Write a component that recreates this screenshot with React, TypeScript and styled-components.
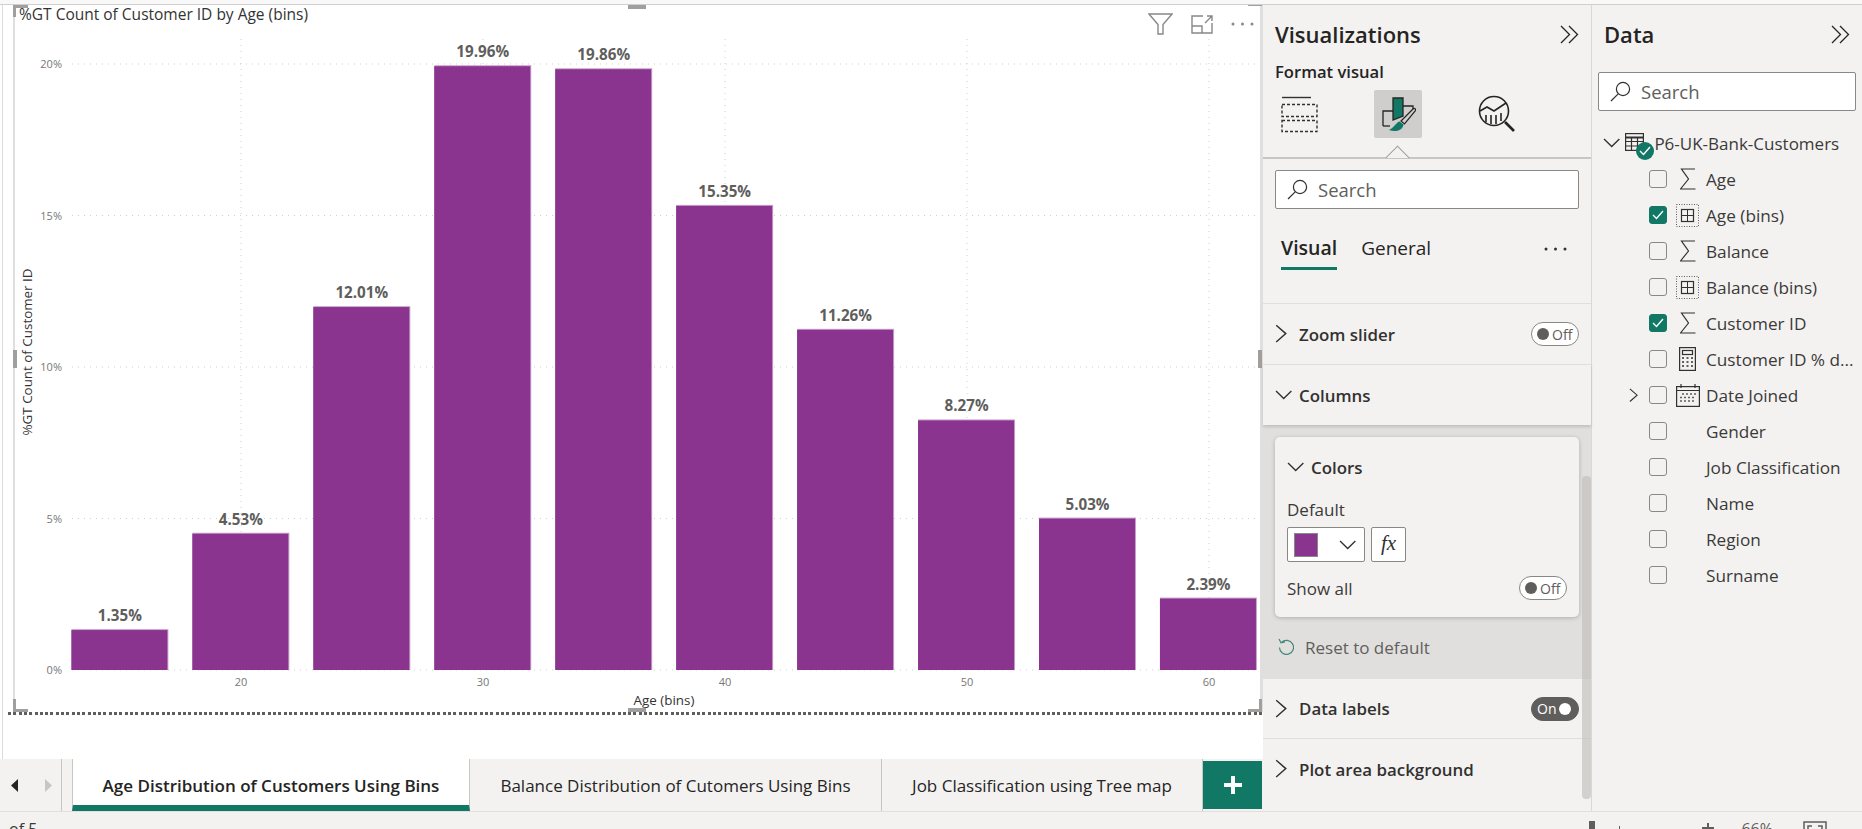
import React from 'react';
import styled, { createGlobalStyle } from 'styled-components';

const GREEN = '#117865';
const PANEL = '#f3f2f1';
const FONT = '"Open Sans", "Liberation Sans", sans-serif';

const GlobalStyle = createGlobalStyle`
  html, body {
    margin: 0;
    padding: 0;
    background: ${PANEL};
    font-family: ${FONT};
    overflow: hidden;
  }
`;

const Page = styled.div`
  width: 1862px;
  height: 829px;
  display: flex;
  flex-direction: column;
  overflow: hidden;
  background: ${PANEL};
  color: #252423;
`;

const TopEdge = styled.div`
  height: 4px;
  flex: none;
  background: #f8f8f8;
  border-bottom: 1px solid #d2d0ce;
`;

const Main = styled.div`
  flex: 1;
  display: flex;
  min-height: 0;
`;

const ReportColumn = styled.div`
  width: 1263px;
  flex: none;
  display: flex;
  flex-direction: column;
`;

const CanvasArea = styled.div`
  height: 754px;
  flex: none;
  background: #fff;
  box-sizing: border-box;
  padding-left: 3px;
  position: relative;
  &::before {
    content: '';
    position: absolute;
    left: 2px;
    top: 0;
    bottom: 0;
    width: 1px;
    background: #dcdcdc;
  }
`;

const VisualFrame = styled.div`
  position: relative;
  margin-left: 10px;
  height: 707px;
  box-sizing: border-box;
  border-left: 2px solid #e1dfdd;
  border-right: 3px solid #e1dfdd;
`;

const ChartSvg = styled.svg`
  display: block;
  overflow: visible;
`;

const DottedRule = styled.div`
  margin-left: 5px;
  height: 3px;
  background: repeating-linear-gradient(90deg, #605e5c 0 3px, #fff 3px 5.3px);
`;

const Handle = styled.div<{ $x: number; $y: number; $w: number; $h: number }>`
  position: absolute;
  left: ${(p) => p.$x}px;
  top: ${(p) => p.$y}px;
  width: ${(p) => p.$w}px;
  height: ${(p) => p.$h}px;
  background: #a19f9d;
`;

const VisualHeader = styled.div`
  position: absolute;
  right: 6px;
  top: 8px;
  display: flex;
  align-items: center;
  gap: 18px;
`;

const TabBar = styled.div`
  height: 52px;
  flex: none;
  display: flex;
  background: ${PANEL};
`;

const PagerNav = styled.div`
  width: 62px;
  flex: none;
  display: flex;
  align-items: center;
  justify-content: space-between;
  box-sizing: border-box;
  padding: 0 9px 0 11px;
  border-right: 1px solid #c8c6c4;
`;

const PagerGap = styled.div`
  width: 10px;
  flex: none;
`;

const Tab = styled.div<{ $active?: boolean; $w: number }>`
  width: ${(p) => p.$w}px;
  flex: none;
  box-sizing: border-box;
  display: flex;
  align-items: center;
  justify-content: center;
  padding-top: ${(p) => (p.$active ? '7px' : '1px')};
  font-size: 17px;
  font-weight: ${(p) => (p.$active ? 600 : 400)};
  white-space: nowrap;
  color: #252423;
  background: ${(p) => (p.$active ? '#fff' : 'transparent')};
  border-left: ${(p) => (p.$active ? '1px solid #c8c6c4' : '0')};
  border-right: 1px solid #c8c6c4;
  border-bottom: ${(p) => (p.$active ? `6px solid ${GREEN}` : '0')};
`;

const AddTab = styled.div`
  width: 59px;
  height: 48px;
  margin: 2px 1px 0 auto;
  background: ${GREEN};
  display: flex;
  align-items: center;
  justify-content: center;
`;

const VisualPanel = styled.div`
  width: 329px;
  flex: none;
  box-sizing: border-box;
  border-right: 1px solid #dad8d6;
  position: relative;
  display: flex;
  flex-direction: column;
`;

const PanelHeader = styled.div`
  display: flex;
  align-items: center;
  justify-content: space-between;
  height: 30px;
  margin-top: 14px;
  padding: 0 12px;
`;

const PanelTitle = styled.h2`
  margin: 0;
  font-size: 22px;
  line-height: 30px;
  font-weight: 600;
  color: #252423;
`;

const SubTitle = styled.div`
  margin: 13px 12px 0;
  height: 20px;
  font-size: 16.6px;
  line-height: 20px;
  font-weight: 600;
`;

const PaneIcons = styled.div`
  margin-top: 8px;
  padding-left: 12px;
  display: flex;
  gap: 51px;
`;

const PaneIcon = styled.div<{ $active?: boolean }>`
  width: 48px;
  height: 48px;
  border-radius: 2px;
  display: flex;
  align-items: center;
  justify-content: center;
  background: ${(p) => (p.$active ? '#d0cecc' : 'transparent')};
`;

const NotchRule = styled.div`
  margin-top: 19px;
  height: 2px;
  background: #c8c6c4;
  position: relative;
  &::after {
    content: '';
    position: absolute;
    left: 126px;
    top: -8px;
    width: 17px;
    height: 17px;
    box-sizing: border-box;
    background: linear-gradient(135deg, ${PANEL} 50%, transparent 50%);
    border-top: 1px solid #a19f9d;
    border-left: 1px solid #a19f9d;
    transform: rotate(45deg);
  }
`;

const SearchBox = styled.div<{ $top: number; $x: number }>`
  margin: ${(p) => p.$top}px ${(p) => p.$x}px 0;
  height: 39px;
  box-sizing: border-box;
  background: #fff;
  border: 1px solid #8a8886;
  border-radius: 2px;
  display: flex;
  align-items: center;
  gap: 10px;
  padding-left: 11px;
  font-size: 18.5px;
  line-height: 39px;
  color: #605e5c;
`;

const PaneTabs = styled.div`
  margin-top: 20px;
  height: 41px;
  padding: 0 24px 0 18px;
  display: flex;
  gap: 24px;
`;

const PaneTab = styled.div<{ $active?: boolean }>`
  height: 38px;
  line-height: 38px;
  font-size: ${(p) => (p.$active ? 19.5 : 19)}px;
  color: #252423;
  font-weight: ${(p) => (p.$active ? 600 : 400)};
  border-bottom: 3px solid ${(p) => (p.$active ? GREEN : 'transparent')};
`;

const PaneDots = styled.div`
  margin-left: auto;
  margin-top: 5px;
`;

const PaneSpacer = styled.div`
  height: 33px;
`;

const SectionRow = styled.div<{ $shadow?: boolean; $h?: number }>`
  height: ${(p) => p.$h || 61}px;
  flex: none;
  box-sizing: border-box;
  border-top: 1px solid #e1dfdd;
  padding: 0 12px;
  display: flex;
  align-items: center;
  font-size: 16.9px;
  font-weight: 600;
  color: #323130;
  position: relative;
  background: ${PANEL};
  box-shadow: ${(p) => (p.$shadow ? '0 2px 3px rgba(0,0,0,0.14)' : 'none')};
`;

const ChevronSlot = styled.span`
  width: 24px;
  flex: none;
  display: flex;
  align-items: center;
`;

const SectionBody = styled.div`
  height: 253px;
  flex: none;
  background: #e1dfdd;
  box-sizing: border-box;
  padding-top: 12px;
`;

const Card = styled.div`
  margin-left: 12px;
  width: 304px;
  height: 180px;
  box-sizing: border-box;
  padding: 0 12px;
  background: ${PANEL};
  border-radius: 5px;
  box-shadow: 0 1px 4px rgba(0, 0, 0, 0.22);
`;

const CardHeader = styled.div`
  height: 40px;
  padding-top: 10px;
  display: flex;
  align-items: center;
  font-size: 16.9px;
  font-weight: 600;
  color: #323130;
`;

const FieldLabel = styled.div`
  margin-top: 13px;
  height: 20px;
  line-height: 20px;
  font-size: 17px;
  color: #3b3a39;
`;

const ColorControls = styled.div`
  margin-top: 7px;
  display: flex;
  gap: 6px;
`;

const ColorSelect = styled.div`
  width: 78px;
  height: 35px;
  box-sizing: border-box;
  background: #fff;
  border: 1px solid #8a8886;
  border-radius: 2px;
  display: flex;
  align-items: center;
  justify-content: space-between;
  padding: 0 8px 0 6px;
`;

const Swatch = styled.div`
  width: 24px;
  height: 24px;
  box-sizing: border-box;
  background: #8a338f;
  border: 1px solid #8a8886;
`;

const FxButton = styled.div`
  width: 35px;
  height: 35px;
  box-sizing: border-box;
  background: #fff;
  border: 1px solid #8a8886;
  border-radius: 2px;
  text-align: center;
  font: italic 21px/31px 'Liberation Serif', serif;
  color: #323130;
`;

const ShowAllRow = styled.div`
  margin-top: 14px;
  display: flex;
  align-items: center;
  justify-content: space-between;
  font-size: 17px;
  color: #3b3a39;
`;

const ResetRow = styled.div`
  height: 61px;
  display: flex;
  align-items: center;
  gap: 11px;
  padding-left: 15px;
  font-size: 17px;
  color: #605e5c;
`;

const Toggle = styled.div<{ $on?: boolean; $inline?: boolean }>`
  width: 48px;
  height: 24px;
  box-sizing: border-box;
  border-radius: 12px;
  flex: none;
  margin-left: ${(p) => (p.$inline ? 'auto' : '0')};
  display: flex;
  flex-direction: ${(p) => (p.$on ? 'row-reverse' : 'row')};
  align-items: center;
  justify-content: ${(p) => (p.$on ? 'flex-end' : 'flex-start')};
  gap: 3px;
  padding: 0 5px;
  font-size: 14px;
  font-weight: 400;
  color: ${(p) => (p.$on ? '#fff' : '#605e5c')};
  background: ${(p) => (p.$on ? '#605e5c' : '#fff')};
  border: 1px solid ${(p) => (p.$on ? '#605e5c' : '#8a8886')};
  &::before {
    content: '';
    width: 12px;
    height: 12px;
    border-radius: 50%;
    flex: none;
    background: ${(p) => (p.$on ? '#fff' : '#605e5c')};
  }
`;

const ScrollThumb = styled.div`
  position: absolute;
  right: 0;
  top: 471px;
  width: 9px;
  height: 323px;
  border-radius: 4px;
  background: rgba(190, 187, 184, 0.6);
`;

const DataPanel = styled.div`
  flex: 1;
  display: flex;
  flex-direction: column;
`;

const TreeHead = styled.div`
  margin-top: 14px;
  height: 36px;
  display: flex;
  align-items: center;
  padding-left: 11px;
  font-size: 17px;
  color: #3b3a39;
  white-space: nowrap;
`;

const TableIconWrap = styled.span`
  position: relative;
  width: 29px;
  height: 20px;
  margin-left: 5px;
  flex: none;
`;

const StatusBadge = styled.span`
  position: absolute;
  left: 11px;
  top: 9px;
  width: 18px;
  height: 18px;
  border-radius: 50%;
  background: ${GREEN};
  display: flex;
  align-items: center;
  justify-content: center;
`;

const FieldRow = styled.div`
  height: 36px;
  display: flex;
  align-items: center;
  font-size: 17.2px;
  color: #3b3a39;
  white-space: nowrap;
`;

const ExpandSlot = styled.span`
  width: 57px;
  flex: none;
  box-sizing: border-box;
  padding-right: 11px;
  display: flex;
  justify-content: flex-end;
`;

const CheckBox = styled.span<{ $checked?: boolean }>`
  width: 18px;
  height: 18px;
  flex: none;
  box-sizing: border-box;
  border-radius: 3px;
  border: 1px solid ${(p) => (p.$checked ? GREEN : '#8a8886')};
  background: ${(p) => (p.$checked ? GREEN : 'transparent')};
  display: flex;
  align-items: center;
  justify-content: center;
`;

const FieldIcon = styled.span<{ $inset: number }>`
  width: 39px;
  flex: none;
  padding-left: ${(p) => p.$inset}px;
  box-sizing: border-box;
  display: flex;
  align-items: center;
`;

const StatusBar = styled.div`
  height: 18px;
  flex: none;
  box-sizing: border-box;
  border-top: 1px solid #e1dfdd;
  display: flex;
  align-items: flex-start;
  overflow: hidden;
  font-size: 16px;
  line-height: 20px;
  color: #605e5c;
  background: ${PANEL};
`;

const PageCount = styled.span`
  margin-left: 9px;
  margin-top: 7px;
  color: #3b3a39;
`;

const ZoomGroup = styled.div`
  margin-left: auto;
  display: flex;
  align-items: flex-start;
`;

const ZoomTrack = styled.div`
  width: 106px;
  height: 18px;
  margin-right: 6px;
  position: relative;
  &::before {
    content: '';
    position: absolute;
    left: 0;
    top: 9px;
    width: 6px;
    height: 8px;
    background: #605e5c;
  }
  &::after {
    content: '';
    position: absolute;
    left: 30px;
    top: 14px;
    width: 1px;
    height: 4px;
    background: #605e5c;
  }
`;

const ZoomPct = styled.span`
  margin: 7px 30px 0 26px;
`;

const FitIcon = styled.svg`
  margin: 9px 35px 0 0;
`;

const Chevron = ({ dir = 'right', size = 12 }: { dir?: 'right' | 'down'; size?: number }) =>
  dir === 'right' ? (
    <svg width={size} height={size * 1.6} viewBox="0 0 10 16" fill="none" stroke="#323130" strokeWidth="1.2">
      <path d="M1 1l8 7-8 7" />
    </svg>
  ) : (
    <svg width={size * 1.45} height={size} viewBox="0 0 17 10" fill="none" stroke="#323130" strokeWidth="1.3">
      <path d="M1 1l7.5 7.5L16 1" />
    </svg>
  );

const DoubleChevron = () => (
  <svg width="19" height="19" viewBox="0 0 19 19" fill="none" stroke="#252423" strokeWidth="1.3">
    <path d="M1 1l8.5 8.5L1 18M9 1l8.5 8.5L9 18" />
  </svg>
);

const SearchIcon = () => (
  <svg width="21" height="21" viewBox="0 0 21 21" fill="none" stroke="#323130" strokeWidth="1.2">
    <circle cx="13" cy="8" r="6.6" />
    <path d="M8.2 12.8L1 20" />
  </svg>
);

const Dots = ({ color }: { color: string }) => (
  <svg width="23" height="4" viewBox="0 0 23 4" fill={color}>
    <circle cx="2" cy="2" r="1.5" />
    <circle cx="11.5" cy="2" r="1.5" />
    <circle cx="21" cy="2" r="1.5" />
  </svg>
);

const FilterIcon = () => (
  <svg width="25" height="22" viewBox="0 0 25 22" fill="none" stroke="#8a8886" strokeWidth="1.4">
    <path d="M1 1h23l-9 10.5V21h-5v-9.5z" />
  </svg>
);

const FocusIcon = () => (
  <svg width="22" height="19" viewBox="0 0 22 19" fill="none" stroke="#8a8886" strokeWidth="1.4">
    <path d="M12 1H1v17h20V8M1 11h10v7M14 8l7-7M16 1h5v5" />
  </svg>
);

const BuildIcon = () => (
  <svg width="37" height="37" viewBox="0 0 37 37" fill="none" stroke="#323130" strokeWidth="1.4">
    <path d="M1 1.5h29" />
    <rect x="1" y="8.5" width="35" height="12" strokeDasharray="3 2" />
    <rect x="1" y="24.5" width="35" height="11" strokeDasharray="3 2" />
  </svg>
);

const FormatIcon = () => (
  <svg width="36" height="37" viewBox="0 0 36 37" fill="none" stroke="#252423" strokeWidth="1.3">
    <path d="M3 30V15h10M23 10h10v5" />
    <path d="M3 30h7" />
    <path d="M13 24V2h10v18z" fill={GREEN} />
    <path d="M21 25L33 13c1.5-1.2 3.2 0 2.4 1.6L24.5 28z" fill="#d0cecc" strokeWidth="1.2" />
    <path d="M19.5 25.5c-3 .3-4 5-10.5 8.5 5 2 13.5 1.5 14.5-5.5z" fill={GREEN} stroke="none" />
  </svg>
);

const AnalyticsIcon = () => (
  <svg width="38" height="38" viewBox="0 0 38 38" fill="none" stroke="#252423" strokeWidth="1.6">
    <circle cx="16" cy="16" r="14.5" />
    <path d="M2 16l7-4 7 4 12-8" />
    <path d="M8 20v7M13 20v9M18 20v9M23 18v8" />
    <path d="M27 27l9 9" strokeWidth="2.6" />
  </svg>
);

const SigmaIcon = () => (
  <svg width="16" height="22" viewBox="0 0 16 22" fill="none" stroke="#323130" strokeWidth="1.2">
    <path d="M15 1H1.5l7 10-8 10h15" />
  </svg>
);

const BinsIcon = () => (
  <svg width="23" height="23" viewBox="0 0 23 23" fill="none" stroke="#323130">
    <rect x="0.5" y="0.5" width="22" height="22" strokeDasharray="1 1.5" stroke="#605e5c" />
    <rect x="5.5" y="5.5" width="12" height="12" strokeWidth="1.2" />
    <path d="M11.5 5.5v12M5.5 11.5h12" />
  </svg>
);

const CalcIcon = () => (
  <svg width="17" height="24" viewBox="0 0 17 24" fill="none" stroke="#323130" strokeWidth="1.2">
    <rect x="0.6" y="0.6" width="15.8" height="22.8" />
    <rect x="3.5" y="3.5" width="10" height="4" />
    <path d="M3 11h2M7.5 11h2M12 11h2M3 15h2M7.5 15h2M12 15h2M3 19h2M7.5 19h2M12 19h2" strokeWidth="1.6" />
  </svg>
);

const CalendarIcon = () => (
  <svg width="24" height="23" viewBox="0 0 24 23" fill="none" stroke="#323130" strokeWidth="1.2">
    <rect x="0.6" y="2.6" width="22.8" height="19.8" />
    <path d="M1 6.5h22M5 0v4M19 0v4" />
    <path d="M6 10h2M10 10h2M14 10h2M18 10h2M4 13.5h2M8 13.5h2M12 13.5h2M16 13.5h2M4 17h2M8 17h2M12 17h2M16 17h2" strokeWidth="1.4" stroke="#605e5c" />
  </svg>
);

const TableIcon = () => (
  <svg width="19" height="18" viewBox="0 0 19 18" fill="none" stroke="#323130" strokeWidth="1.2">
    <rect x="0.6" y="0.6" width="17.8" height="16.8" />
    <path d="M1 4.5h17" strokeWidth="2" />
    <path d="M1 8.5h17M1 13h17M6.5 4v13M12.5 4v13" />
  </svg>
);

const CheckMark = () => (
  <svg width="12" height="10" viewBox="0 0 12 10" fill="none" stroke="#fff" strokeWidth="1.4">
    <path d="M1 5l3.5 3.5L11 1" />
  </svg>
);

const ResetIcon = () => (
  <svg width="16" height="19" viewBox="0 0 16 19" fill="none" stroke="#3f8a7c" strokeWidth="1.2">
    <path d="M3.5 4.5a7 7 0 1 1-2 5M1 1l2 3.8L7 4" />
  </svg>
);

const bars = [1.35, 4.53, 12.01, 19.96, 19.86, 15.35, 11.26, 8.27, 5.03, 2.39];
const BASE_Y = 670;
const PX_PER_PCT = 30.3;

const Chart = () => (
  <ChartSvg width="1245" height="707" viewBox="15 5 1245 707" fontFamily={FONT}>
    <g stroke="#cfcfcf" strokeDasharray="1 5">
      {[0, 5, 10, 15, 20].map((v) => (
        <line key={v} x1="72" x2="1256" y1={BASE_Y - v * PX_PER_PCT} y2={BASE_Y - v * PX_PER_PCT} />
      ))}
      {[241, 483, 725, 967, 1209].map((x) => (
        <line key={x} x1={x} x2={x} y1="39" y2={BASE_Y} />
      ))}
    </g>
    {bars.map((v, i) => {
      const x = 71.4 + i * 120.95;
      const top = BASE_Y - v * PX_PER_PCT;
      return (
        <g key={v}>
          <rect x={x} y={top} width="97" height={BASE_Y - top} fill="#c7a0ca" />
          <rect x={x} y={top + 1} width="96" height={BASE_Y - top - 1} fill="#8a338f" />
          <text x={x + 48.5} y={top - 8} textAnchor="middle" fontSize="15.2" fontWeight="700" fill="#605e5c">
            {v.toFixed(2)}%
          </text>
        </g>
      );
    })}
    <g fontSize="11" fill="#777">
      {[20, 15, 10, 5, 0].map((v) => (
        <text key={v} x="62" y={BASE_Y - v * PX_PER_PCT + 4} textAnchor="end">
          {v}%
        </text>
      ))}
      {[20, 30, 40, 50, 60].map((v, i) => (
        <text key={v} x={241 + i * 242} y="686" textAnchor="middle">
          {v}
        </text>
      ))}
    </g>
    <text x="19" y="20" fontSize="15.5" fill="#333">
      %GT Count of Customer ID by Age (bins)
    </text>
    <text x="664" y="705" fontSize="13.4" fill="#333" textAnchor="middle">
      Age (bins)
    </text>
    <text transform="translate(32 352) rotate(-90)" fontSize="13.4" fill="#333" textAnchor="middle">
      %GT Count of Customer ID
    </text>
  </ChartSvg>
);

type FieldKind = 'sigma' | 'bins' | 'calc' | 'calendar' | 'none';

const fields: { name: string; kind: FieldKind; checked?: boolean; expand?: boolean }[] = [
  { name: 'Age', kind: 'sigma' },
  { name: 'Age (bins)', kind: 'bins', checked: true },
  { name: 'Balance', kind: 'sigma' },
  { name: 'Balance (bins)', kind: 'bins' },
  { name: 'Customer ID', kind: 'sigma', checked: true },
  { name: 'Customer ID % d...', kind: 'calc' },
  { name: 'Date Joined', kind: 'calendar', expand: true },
  { name: 'Gender', kind: 'none' },
  { name: 'Job Classification', kind: 'none' },
  { name: 'Name', kind: 'none' },
  { name: 'Region', kind: 'none' },
  { name: 'Surname', kind: 'none' },
];

const fieldIcon = (kind: FieldKind) => {
  if (kind === 'sigma') return <SigmaIcon />;
  if (kind === 'bins') return <BinsIcon />;
  if (kind === 'calc') return <CalcIcon />;
  if (kind === 'calendar') return <CalendarIcon />;
  return null;
};

const iconInset: Record<FieldKind, number> = { sigma: 13, bins: 9, calc: 12, calendar: 9, none: 0 };

const App: React.FC = () => (
  <Page>
    <GlobalStyle />
    <TopEdge />
    <Main>
      <ReportColumn>
        <CanvasArea>
          <VisualFrame>
            <Chart />
            <VisualHeader>
              <FilterIcon />
              <FocusIcon />
              <Dots color="#8a8886" />
            </VisualHeader>
            <Handle $x={-2} $y={0} $w={15} $h={3} />
            <Handle $x={-2} $y={0} $w={3} $h={12} />
            <Handle $x={613} $y={0} $w={18} $h={4} />
            <Handle $x={1233} $y={0} $w={14} $h={1} />
            <Handle $x={-2} $y={345} $w={4} $h={18} />
            <Handle $x={1243} $y={345} $w={4} $h={18} />
            <Handle $x={-2} $y={694} $w={3} $h={13} />
            <Handle $x={-2} $y={704} $w={15} $h={3} />
            <Handle $x={613} $y={703} $w={18} $h={4} />
            <Handle $x={1244} $y={694} $w={3} $h={13} />
            <Handle $x={1233} $y={704} $w={14} $h={3} />
          </VisualFrame>
          <DottedRule />
        </CanvasArea>
        <TabBar>
          <PagerNav>
            <svg width="7" height="13" viewBox="0 0 7 13" fill="#252423">
              <path d="M7 0v13L0 6.5z" />
            </svg>
            <svg width="7" height="13" viewBox="0 0 7 13" fill="#c8c6c4">
              <path d="M0 0v13l7-6.5z" />
            </svg>
          </PagerNav>
          <PagerGap />
          <Tab $active $w={398}>
            Age Distribution of Customers Using Bins
          </Tab>
          <Tab $w={412}>Balance Distribution of Cutomers Using Bins</Tab>
          <Tab $w={321}>Job Classification using Tree map</Tab>
          <AddTab>
            <svg width="18" height="18" viewBox="0 0 18 18" fill="#fff">
              <path d="M7 0h4v7h7v4h-7v7H7v-7H0V7h7z" />
            </svg>
          </AddTab>
        </TabBar>
      </ReportColumn>

      <VisualPanel>
        <PanelHeader>
          <PanelTitle>Visualizations</PanelTitle>
          <DoubleChevron />
        </PanelHeader>
        <SubTitle>Format visual</SubTitle>
        <PaneIcons>
          <PaneIcon>
            <BuildIcon />
          </PaneIcon>
          <PaneIcon $active>
            <FormatIcon />
          </PaneIcon>
          <PaneIcon>
            <AnalyticsIcon />
          </PaneIcon>
        </PaneIcons>
        <NotchRule />
        <SearchBox $top={11} $x={12}>
          <SearchIcon />
          Search
        </SearchBox>
        <PaneTabs>
          <PaneTab $active>Visual</PaneTab>
          <PaneTab>General</PaneTab>
          <PaneDots>
            <Dots color="#323130" />
          </PaneDots>
        </PaneTabs>
        <PaneSpacer />
        <SectionRow>
          <ChevronSlot>
            <Chevron />
          </ChevronSlot>
          Zoom slider
          <Toggle $inline>Off</Toggle>
        </SectionRow>
        <SectionRow $shadow>
          <ChevronSlot>
            <Chevron dir="down" />
          </ChevronSlot>
          Columns
        </SectionRow>
        <SectionBody>
          <Card>
            <CardHeader>
              <ChevronSlot>
                <Chevron dir="down" />
              </ChevronSlot>
              Colors
            </CardHeader>
            <FieldLabel>Default</FieldLabel>
            <ColorControls>
              <ColorSelect>
                <Swatch />
                <Chevron dir="down" />
              </ColorSelect>
              <FxButton>fx</FxButton>
            </ColorControls>
            <ShowAllRow>
              Show all
              <Toggle>Off</Toggle>
            </ShowAllRow>
          </Card>
          <ResetRow>
            <ResetIcon />
            Reset to default
          </ResetRow>
        </SectionBody>
        <SectionRow $h={60}>
          <ChevronSlot>
            <Chevron />
          </ChevronSlot>
          Data labels
          <Toggle $on $inline>
            On
          </Toggle>
        </SectionRow>
        <SectionRow>
          <ChevronSlot>
            <Chevron />
          </ChevronSlot>
          Plot area background
        </SectionRow>
        <ScrollThumb />
      </VisualPanel>

      <DataPanel>
        <PanelHeader>
          <PanelTitle>Data</PanelTitle>
          <DoubleChevron />
        </PanelHeader>
        <SearchBox $top={23} $x={6}>
          <SearchIcon />
          Search
        </SearchBox>
        <TreeHead>
          <Chevron dir="down" />
          <TableIconWrap>
            <TableIcon />
            <StatusBadge>
              <CheckMark />
            </StatusBadge>
          </TableIconWrap>
          P6-UK-Bank-Customers
        </TreeHead>
        {fields.map((f) => (
          <FieldRow key={f.name}>
            <ExpandSlot>{f.expand && <Chevron size={9} />}</ExpandSlot>
            <CheckBox $checked={f.checked}>{f.checked && <CheckMark />}</CheckBox>
            <FieldIcon $inset={iconInset[f.kind]}>{fieldIcon(f.kind)}</FieldIcon>
            {f.name}
          </FieldRow>
        ))}
      </DataPanel>
    </Main>
    <StatusBar>
      <PageCount>of 5</PageCount>
      <ZoomGroup>
        <ZoomTrack />
        <svg width="14" height="18" viewBox="0 0 14 18" fill="#605e5c">
          <path d="M6 11h2v4h5v2H8v4H6v-4H1v-2h5z" />
        </svg>
        <ZoomPct>66%</ZoomPct>
        <FitIcon width="24" height="18" viewBox="0 0 24 18" fill="none" stroke="#605e5c" strokeWidth="1.5">
          <rect x="1" y="1" width="22" height="20" />
          <path d="M5 8V5h4M15 5h4v3" />
        </FitIcon>
      </ZoomGroup>
    </StatusBar>
  </Page>
);

export default App;
